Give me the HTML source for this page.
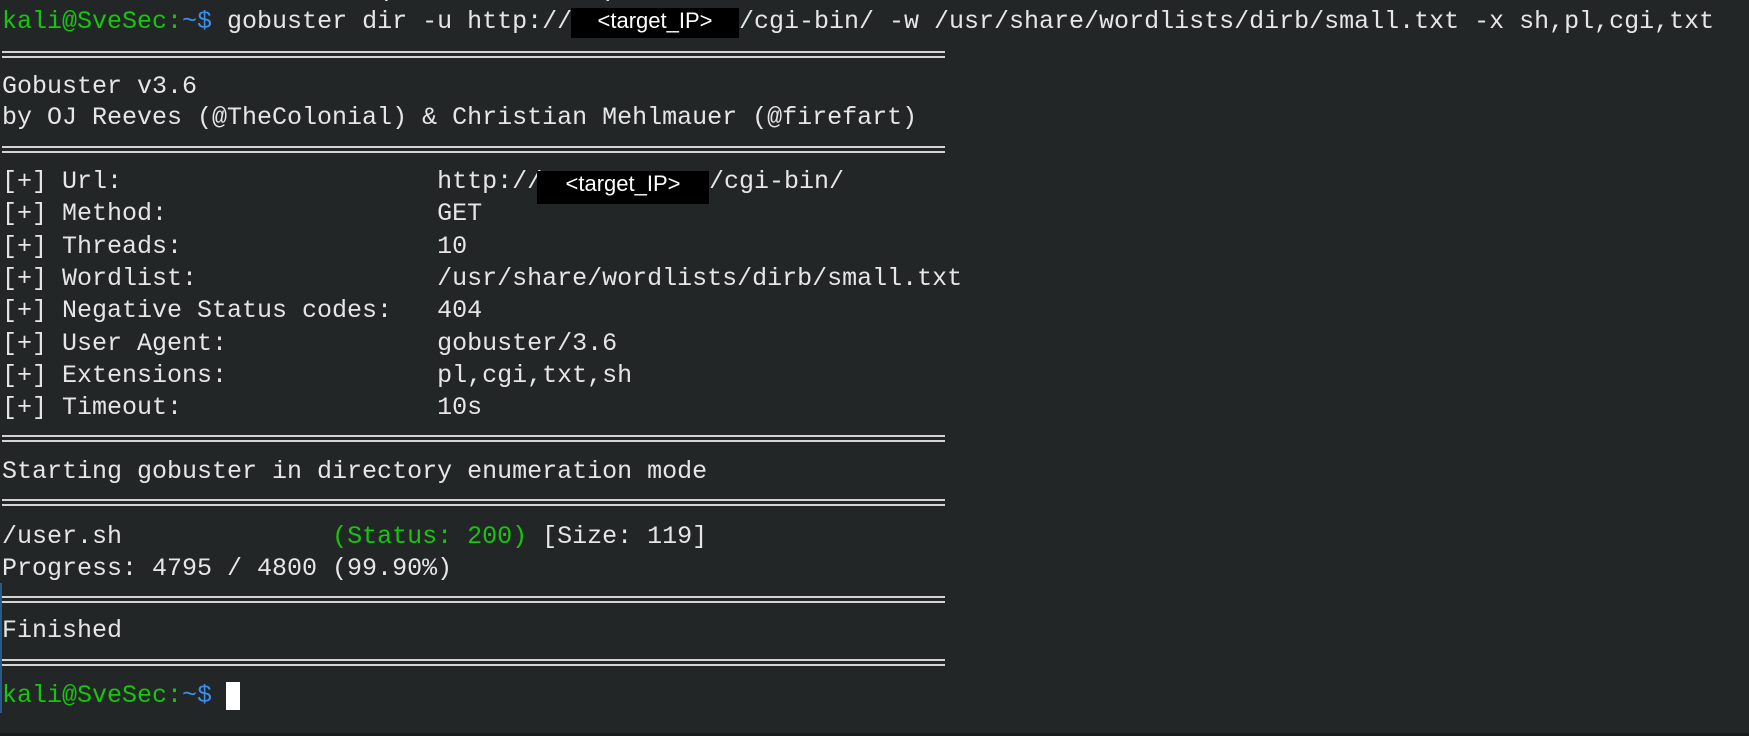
<!DOCTYPE html>
<html><head><meta charset="utf-8"><style>
html,body{margin:0;padding:0;}
body{width:1749px;height:736px;background:#232627;position:relative;overflow:hidden;font-family:"Liberation Mono",monospace;font-size:25px;color:#e6e6e6;}
.r{position:absolute;left:2px;height:32px;line-height:32px;white-space:pre;}
.g{color:#16c60c}.b{color:#3b8eea}
.sep{position:absolute;left:2px;width:943px;height:3px;border-top:2px solid #d4d4d4;border-bottom:2px solid #d4d4d4;}
.red{position:absolute;background:#000;color:#fff;font-family:"Liberation Sans",sans-serif;font-size:22px;text-align:center;white-space:pre;}
</style></head><body>
<div class="r" style="top:-26px">                         ( ·            )</div>
<div class="r" style="top:6px"><span class="g">kali@SveSec:</span><span class="b">~$</span> gobuster dir -u http://</div>
<div class="red" style="left:571px;top:8px;width:168px;height:30px;line-height:26px"> &lt;target_IP&gt; </div>
<div class="r" style="top:6px;left:739px">/cgi-bin/ -w /usr/share/wordlists/dirb/small.txt -x sh,pl,cgi,txt</div>
<div class="sep" style="top:51px"></div>
<div class="r" style="top:71px">Gobuster v3.6</div>
<div class="r" style="top:102px">by OJ Reeves (@TheColonial) &amp; Christian Mehlmauer (@firefart)</div>
<div class="sep" style="top:146px"></div>
<div class="r" style="top:166px">[+] Url:                     http://</div>
<div class="red" style="left:537px;top:171px;width:172px;height:33px;line-height:26px"> &lt;target_IP&gt; </div>
<div class="r" style="top:166px;left:709px">/cgi-bin/</div>
<div class="r" style="top:198px">[+] Method:                  GET</div>
<div class="r" style="top:231px">[+] Threads:                 10</div>
<div class="r" style="top:263px">[+] Wordlist:                /usr/share/wordlists/dirb/small.txt</div>
<div class="r" style="top:295px">[+] Negative Status codes:   404</div>
<div class="r" style="top:328px">[+] User Agent:              gobuster/3.6</div>
<div class="r" style="top:360px">[+] Extensions:              pl,cgi,txt,sh</div>
<div class="r" style="top:392px">[+] Timeout:                 10s</div>
<div class="sep" style="top:435px"></div>
<div class="r" style="top:456px">Starting gobuster in directory enumeration mode</div>
<div class="sep" style="top:499px"></div>
<div class="r" style="top:521px">/user.sh              <span class="g">(Status: 200)</span> [Size: 119]</div>
<div class="r" style="top:553px">Progress: 4795 / 4800 (99.90%)</div>
<div class="sep" style="top:596px"></div>
<div class="r" style="top:615px">Finished</div>
<div class="sep" style="top:659px"></div>
<div class="r" style="top:680px"><span class="g">kali@SveSec:</span><span class="b">~$</span></div>
<div style="position:absolute;left:226px;top:682px;width:14px;height:28px;background:#fff"></div>
<div style="position:absolute;left:0;top:583px;width:2px;height:130px;background:#2a5a8a"></div>
<div style="position:absolute;left:0;top:733px;width:1749px;height:3px;background:#1a1b1c"></div>
</body></html>
